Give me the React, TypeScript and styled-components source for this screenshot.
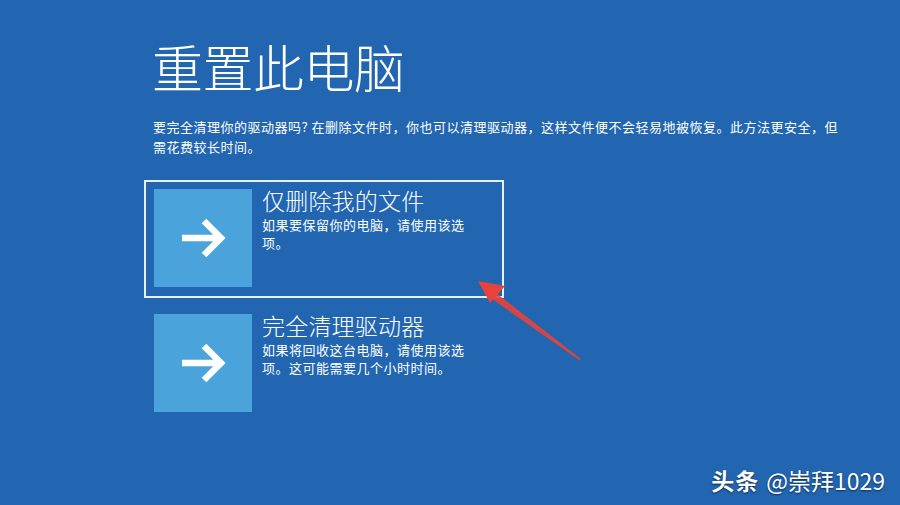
import React from 'react';
import styled, { createGlobalStyle } from 'styled-components';

const Global = createGlobalStyle`
  html, body {
    margin: 0;
    padding: 0;
    background: #2266b2;
  }
  * {
    box-sizing: border-box;
  }
`;

const Page = styled.div`
  position: relative;
  width: 900px;
  height: 505px;
  overflow: hidden;
  background: #2266b2;
  color: #ffffff;
  font-family: "Noto Sans CJK SC", "Noto Sans", sans-serif;
  padding: 32px 0 0 152px;
`;

const Title = styled.h1`
  margin: 0;
  font-size: 51px;
  font-weight: 300;
  line-height: 68px;
  letter-spacing: -0.5px;
`;

const Intro = styled.p`
  margin: 17px 0 0 1px;
  width: 690px;
  font-size: 13px;
  line-height: 20px;
  letter-spacing: 0.5px;
`;

const Options = styled.div`
  display: flex;
  flex-direction: column;
  gap: 7px;
  margin: 23px 0 0 -8px;
  width: 360px;
`;

const Option = styled.div<{ $selected?: boolean }>`
  display: flex;
  gap: 10px;
  padding: 7px 8px 9px 8px;
  border: 2px solid ${(p) => (p.$selected ? '#e6f2ff' : 'transparent')};
`;

const Tile = styled.div`
  flex: none;
  width: 98px;
  height: 98px;
  background: #4aa3da;
  display: flex;
  align-items: center;
  justify-content: center;
`;

const Text = styled.div`
  display: flex;
  flex-direction: column;
  margin-top: -5px;
`;

const OptionTitle = styled.div`
  font-size: 23px;
  line-height: 32px;
  font-weight: 300;
  letter-spacing: 0.2px;
`;

const OptionDesc = styled.div`
  font-size: 13px;
  line-height: 18px;
  letter-spacing: 0.5px;
  width: 215px;
`;

const Watermark = styled.div`
  position: absolute;
  right: 15px;
  bottom: 11px;
  font-size: 23px;
  line-height: 28px;
  text-shadow: 0 1px 2px rgba(0, 0, 0, 0.6);
  font-family: "Noto Sans CJK SC", "Liberation Sans", sans-serif;

  b {
    font-weight: 700;
    margin-right: 7px;
    letter-spacing: 1px;
  }
`;

const Annotation = styled.svg`
  position: absolute;
  left: 470px;
  top: 272px;
`;

const Arrow = () => (
  <svg width="48" height="42" viewBox="0 0 48 42">
    <path
      d="M3 21 H42 M25 4 L42 21 L25 38"
      fill="none"
      stroke="#ffffff"
      strokeWidth="6.5"
      strokeLinecap="butt"
      strokeLinejoin="miter"
    />
  </svg>
);

const options = [
  {
    title: '仅删除我的文件',
    desc: '如果要保留你的电脑，请使用该选项。',
    selected: true,
  },
  {
    title: '完全清理驱动器',
    desc: '如果将回收这台电脑，请使用该选项。这可能需要几个小时时间。',
    selected: false,
  },
];

const App = () => {
  return (
    <>
      <Global />
      <Page>
        <Title>重置此电脑</Title>
        <Intro>
          要完全清理你的驱动器吗? 在删除文件时，你也可以清理驱动器，这样文件便不会轻易地被恢复。此方法更安全，但需花费较长时间。
        </Intro>
        <Options>
          {options.map((o) => (
            <Option key={o.title} $selected={o.selected}>
              <Tile>
                <Arrow />
              </Tile>
              <Text>
                <OptionTitle>{o.title}</OptionTitle>
                <OptionDesc>{o.desc}</OptionDesc>
              </Text>
            </Option>
          ))}
        </Options>
        <Annotation width="120" height="95" viewBox="0 0 120 95">
          <polygon points="111,87 26,21 22,27 109,88" fill="#e8433a" opacity="0.9" />
          <polygon points="8,9 35,14 20,31" fill="#e8433a" />
        </Annotation>
        <Watermark>
          <b>头条</b>@崇拜1029
        </Watermark>
      </Page>
    </>
  );
};

export default App;
